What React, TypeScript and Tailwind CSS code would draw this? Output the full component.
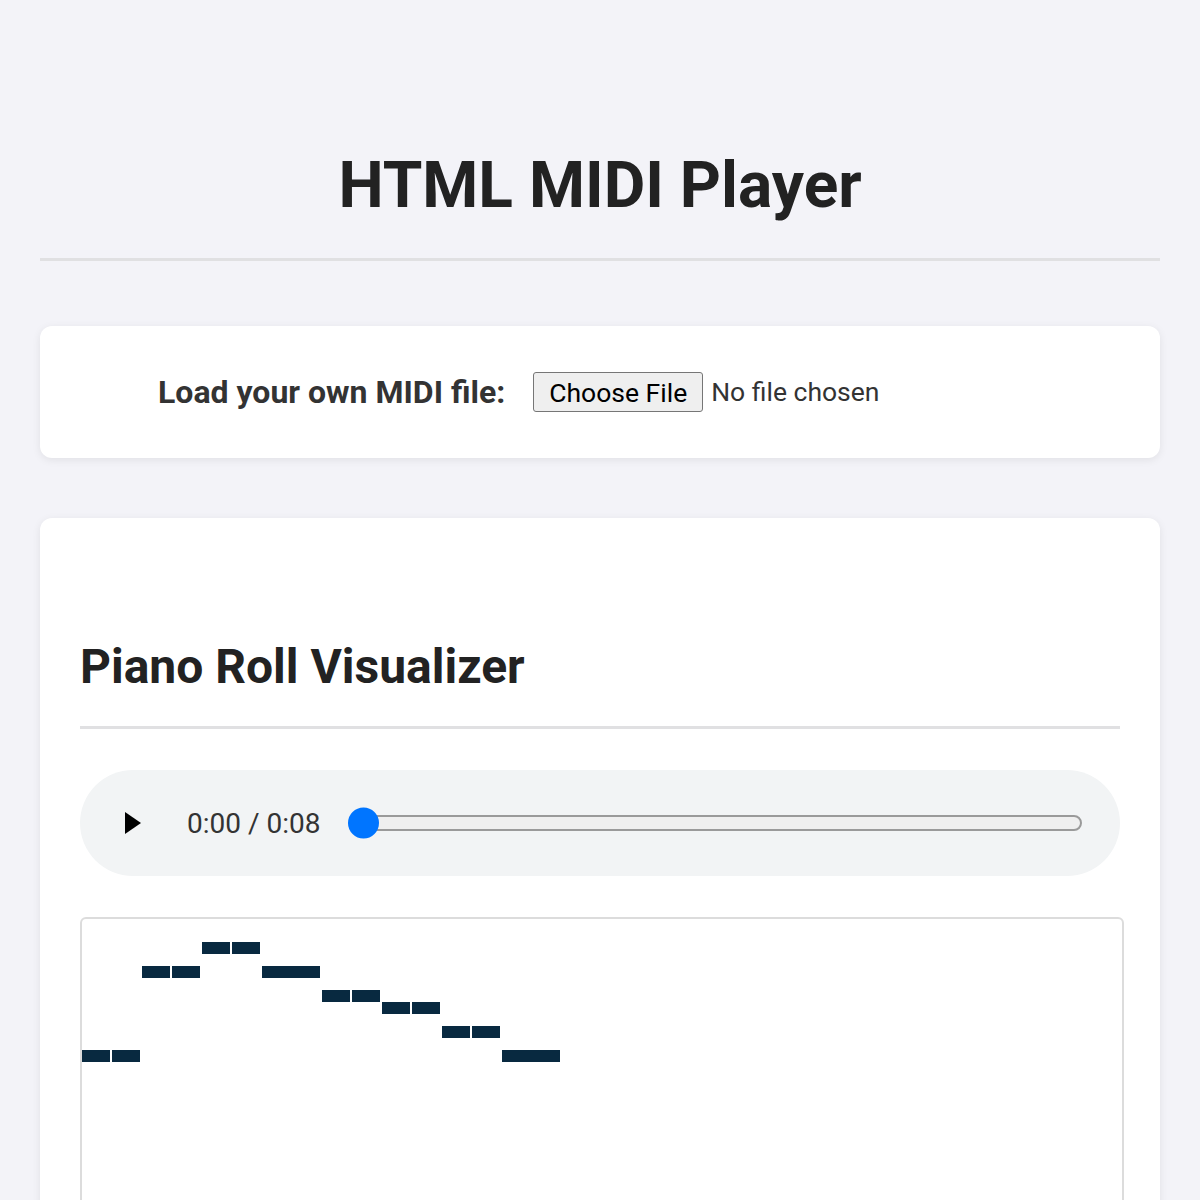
import React from "react";

const notes: [number, number, number][] = [
  [82, 28, 1050], [112, 28, 1050],
  [142, 28, 966], [172, 28, 966],
  [202, 28, 942], [232, 28, 942],
  [262, 58, 966],
  [322, 28, 990], [352, 28, 990],
  [382, 28, 1002], [412, 28, 1002],
  [442, 28, 1026], [472, 28, 1026],
  [502, 58, 1050],
];

export default function App() {
  return (
    <div
      className="min-h-screen bg-[#f3f3f8] px-10 pb-10"
      style={{ fontFamily: "Roboto, 'Noto Sans', sans-serif" }}
    >
      <h1 className="pt-[148px] text-center text-[64px] leading-[75px] font-bold text-[#222]">
        HTML MIDI Player
      </h1>
      <div className="mt-[35px] h-[3px] bg-[#e0e0e2]" />

      <div className="mt-[65px] flex h-[132px] items-center rounded-xl bg-white pl-[118px] shadow-[0_2px_8px_rgba(0,0,0,0.08)]">
        <span className="text-[32px] font-bold text-[#333]">Load your own MIDI file:</span>
        <div className="ml-[28px] flex items-center">
          <button className="h-[40px] rounded-[3px] border border-[#767676] bg-[#efefef] px-[15px] text-[26.5px] text-black">
            Choose File
          </button>
          <span className="ml-[8px] text-[26.5px] text-[#333]">No file chosen</span>
        </div>
      </div>

      <div className="mt-[60px] rounded-xl bg-white px-10 pt-[122px] pb-10 shadow-[0_2px_8px_rgba(0,0,0,0.08)]">
        <h2 className="text-[48px] leading-[54px] font-bold text-[#222]">Piano Roll Visualizer</h2>
        <div className="mt-[32px] h-[3px] bg-[#e0e0e2]" />

        <div className="mt-[41px] flex h-[106px] items-center rounded-full bg-[#f2f4f5] pl-[44px] pr-[38px]">
          <svg width="18" height="24" viewBox="0 0 18 24" className="shrink-0">
            <polygon points="1,1 17,12 1,23" fill="#000" />
          </svg>
          <span className="ml-[45px] mt-[2px] shrink-0 text-[28px] text-[#333]">0:00 / 0:08</span>
          <div className="relative ml-[41px] h-[16px] flex-1 rounded-full border-2 border-[#9a9a9a] bg-[#efefef]">
            <div className="absolute left-[-15px] top-1/2 h-[31px] w-[31px] -translate-y-1/2 rounded-full bg-[#0075ff]" />
          </div>
        </div>

        <div className="relative mt-[41px] h-[400px] w-[1044px] rounded-md border-2 border-[#dcdcdc] bg-white">
          {notes.map(([x, w, y], i) => (
            <div
              key={i}
              className="absolute h-[12px] bg-[#082940]"
              style={{ left: x - 82, top: y - 919, width: w }}
            />
          ))}
        </div>
      </div>
    </div>
  );
}
